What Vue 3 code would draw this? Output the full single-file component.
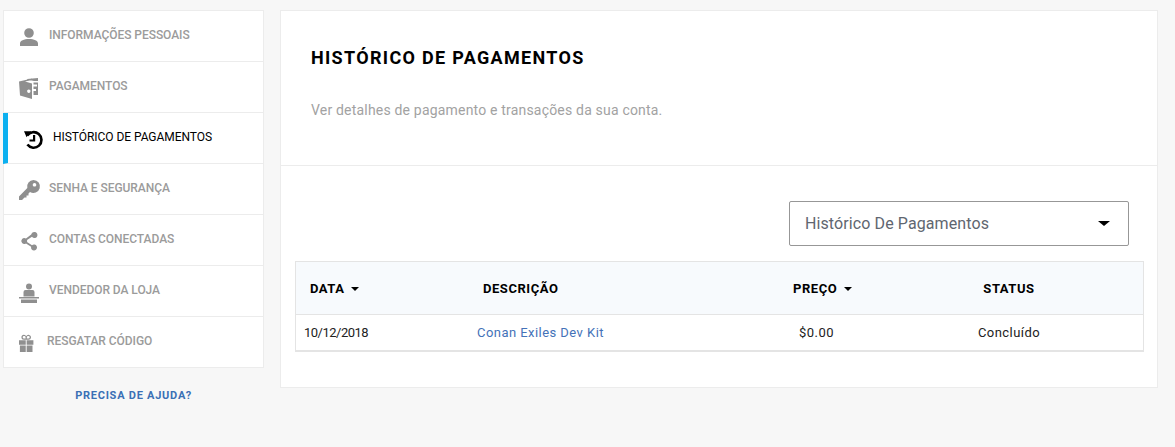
<script setup>
const nav = [
  { label: 'Informações pessoais', d: 'M10 3.200a4.800 4.800 0 1 1 0 9.600a4.800 4.800 0 0 1 0-9.600zM1 21v-2.600C1 15.600 5 14 10 14s9 1.600 9 4.400V21z' },
  { label: 'Pagamentos', d: 'M0 5.500 13 2.500V4L6 5.600 13 7.500V23L1 19.500zM9.800 13.500a1.700 1.700 0 1 0 .01 0zM8 3 19 2V5H15L8 3.400zM14.500 6.500H19V19H14.500V15H17V13H14.500V10.500H18V8.500H14.500z' },
  { label: 'Histórico de pagamentos', active: true, d: 'M0 4.200H7.500L4.800 7 2.600 10.200z M9 8h2.200v6.600H5.500v-2.200H9z', stroke: 'M3.200 8.600A7.800 7.800 0 1 1 3.400 17.600' },
  { label: 'Senha e segurança', d: 'M14.500 2a6.500 6.500 0 1 1-3.500 12L9.500 15.500V17.500H7.500V19.500H5.500L3 22H0V18.500L8.300 10A6.500 6.500 0 0 1 14.500 2zm1 3a1.800 1.800 0 1 0 .01 0z' },
  { label: 'Contas conectadas', d: 'M15.500 3a3 3 0 1 1-2.500 4.700L8 11a3 3 0 0 1 0 2l5 3.300a3 3 0 1 1-.900 1.500L7 14.500a3 3 0 1 1 0-5L12.200 5.500A3 3 0 0 1 15.500 3z' },
  { label: 'Vendedor da loja', d: 'M10 3.500a3 3 0 1 1 0 6a3 3 0 0 1 0-6zM6.500 10h7a2 2 0 0 1 2 2v4.500h-11V12a2 2 0 0 1 2-2zM0 17h20v1.500H0zM2 19.500h16V23H2z' },
  { label: 'Resgatar código', small: true, d: 'M0 9H7.500V14H0zM8.500 9H16V14H8.500zM1 15H7.500V22H1zM8.500 15H15V22H8.500z M5.500 3a2.800 2.800 0 0 1 2.500 1.700A2.800 2.800 0 1 1 10.500 8.600H5.500A2.800 2.800 0 0 1 5.500 3zm0 1.400a1.400 1.400 0 0 0 0 2.800H7.300V6a1.600 1.600 0 0 0-1.800-1.600zm5 0A1.600 1.600 0 0 0 8.700 6V7.200h1.800a1.400 1.400 0 0 0 0-2.800z' }
]
</script>

<template>
  <div class="page">
    <aside class="side">
      <nav class="menu">
        <a v-for="item in nav" :key="item.label" class="item" :class="{ active: item.active, small: item.small }">
          <svg class="icon" viewBox="0 0 20 22">
            <path v-if="item.stroke" :d="item.stroke" class="ring" />
            <path :d="item.d" />
          </svg>
          <span>{{ item.label }}</span>
        </a>
      </nav>
      <a class="help">PRECISA DE AJUDA?</a>
    </aside>

    <main class="panel">
      <header class="head">
        <h1>HISTÓRICO DE PAGAMENTOS</h1>
        <p>Ver detalhes de pagamento e transações da sua conta.</p>
      </header>
      <section class="body">
        <div class="select">
          <span>Histórico De Pagamentos</span>
          <i class="caret big"></i>
        </div>
        <table>
          <colgroup>
            <col class="c1" /><col class="c2" /><col class="c3" /><col />
          </colgroup>
          <thead>
            <tr>
              <th class="h1">DATA <i class="caret"></i></th>
              <th class="h2">DESCRIÇÃO</th>
              <th class="h3">PREÇO <i class="caret"></i></th>
              <th class="center">STATUS</th>
            </tr>
          </thead>
          <tbody>
            <tr>
              <td class="d1 date">10/12/2018</td>
              <td class="d1"><a class="link">Conan Exiles Dev Kit</a></td>
              <td class="d3">$0.00</td>
              <td class="center">Concluído</td>
            </tr>
          </tbody>
        </table>
      </section>
    </main>
  </div>
</template>

<style>
html, body { margin: 0; background: #f7f7f7; }
</style>

<style scoped>
.page {
  display: flex;
  gap: 16px;
  align-items: flex-start;
  padding: 10px 17px 0 3px;
  font-family: Roboto, "Liberation Sans", sans-serif;
  color: #000;
}
.side { width: 261px; flex: none; }
.menu {
  display: flex;
  flex-direction: column;
  background: #fff;
  border: 1px solid #ececec;
}
.item {
  display: flex;
  align-items: center;
  gap: 10px;
  height: 50px;
  padding-left: 15px;
  border-bottom: 1px solid #ececec;
  font-size: 12px;
  font-weight: 500;
  letter-spacing: -0.05px;
  text-transform: uppercase;
  color: #9b9b9b;
}
.item span { margin-bottom: 2px; }
.item:last-child { border-bottom: 0; }
.item.active {
  margin-left: -1px;
  border-left: 5px solid #0cb0f0;
  padding-left: 16px;
  gap: 9px;
  font-weight: 400;
  color: #000;
}
.item.small .icon { width: 18px; }
.icon {
  width: 20px;
  height: 22px;
  flex: none;
  overflow: visible;
  fill: #8f8f8f;
}
.active .icon { fill: #000; }
.ring { fill: none; stroke: #000; stroke-width: 2.6; }
.help {
  display: block;
  margin-top: 21px;
  text-align: center;
  font-size: 11px;
  font-weight: 700;
  letter-spacing: 0.75px;
  color: #3a70b5;
}
.panel {
  flex: 1;
  background: #fff;
  border: 1px solid #ececec;
}
.head {
  height: 155px;
  box-sizing: border-box;
  padding: 36px 30px 0;
  border-bottom: 1px solid #ececec;
}
h1 {
  margin: 0;
  font-size: 18px;
  line-height: 22px;
  font-weight: 700;
  letter-spacing: 1.32px;
}
p {
  margin: 31px 0 0;
  font-size: 14px;
  line-height: 20px;
  letter-spacing: 0.19px;
  color: #a2a2a2;
}
.body { padding: 35px 13px 35px 14px; }
.select {
  display: flex;
  align-items: center;
  justify-content: space-between;
  box-sizing: border-box;
  width: 340px;
  height: 45px;
  margin: 0 15px 15px auto;
  padding: 0 18px 0 15px;
  border: 1px solid #979797;
  border-radius: 2px;
  font-size: 16px;
  letter-spacing: 0.1px;
  color: #5f6670;
}
table {
  width: 100%;
  table-layout: fixed;
  border-collapse: separate;
  border-spacing: 0;
  border: 1px solid #e4e4e4;
  border-bottom-width: 2px;
  font-size: 13px;
}
.c1 { width: 173px; }
.c2 { width: 316px; }
.c3 { width: 90px; }
th {
  height: 52px;
  padding: 0;
  background: #f7fafd;
  border-bottom: 1px solid #e4e4e4;
  text-align: left;
  font-weight: 700;
  letter-spacing: 0.55px;
  white-space: nowrap;
}
td {
  height: 35px;
  padding: 0;
  letter-spacing: 0.45px;
  color: #222;
}
.h1 { padding-left: 14px; }
.h2 { padding-left: 14px; }
.h3 { padding-left: 8px; }
.d1 { padding-left: 8px; }
.d3 { padding-left: 14px; }
td.date { letter-spacing: -0.5px; }
th.center, td.center { text-align: center; }
.link { color: #4472b8; }
.caret {
  display: inline-block;
  width: 0;
  height: 0;
  margin-left: 3px;
  vertical-align: 2px;
  border-left: 4px solid transparent;
  border-right: 4px solid transparent;
  border-top: 4px solid #000;
}
.caret.big {
  border-left-width: 6px;
  border-right-width: 6px;
  border-top-width: 5px;
}
</style>
